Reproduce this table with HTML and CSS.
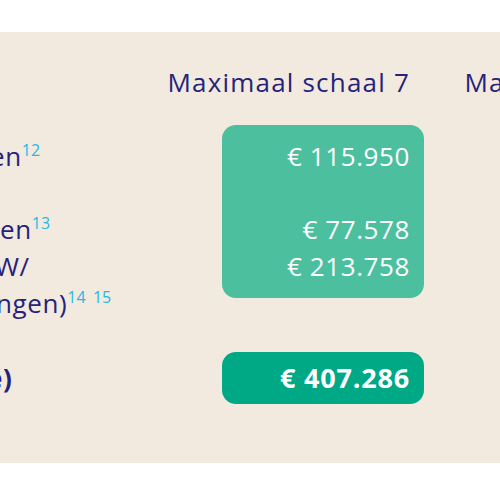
FILE: index.html
```html
<!DOCTYPE html>
<html lang="nl">
<head>
<meta charset="utf-8">
<link rel="stylesheet" href="styles.css">
</head>
<body>
<section class="band">
  <div class="table">
    <div class="labels">
      <div class="head-spacer"></div>
      <div class="label-block">
        <div class="line shift-1">en<sup>12</sup></div>
        <div class="spacer"></div>
        <div class="line">en<sup>13</sup></div>
        <div class="line shift-2">W/</div>
        <div class="line shift-3">ngen)<sup>14</sup> <sup>15</sup></div>
      </div>
      <div class="total-label"><span class="shift-4">e)</span></div>
    </div>
    <div class="col">
      <div class="head">Maximaal schaal 7</div>
      <div class="card">
        <div class="line">€ 115.950</div>
        <div class="spacer"></div>
        <div class="line">€ 77.578</div>
        <div class="line">€ 213.758</div>
      </div>
      <div class="pill">€ 407.286</div>
    </div>
    <div class="col">
      <div class="head">Maximaal schaal 8</div>
      <div class="card">
        <div class="line">€ 124.880</div>
        <div class="spacer"></div>
        <div class="line">€ 83.553</div>
        <div class="line">€ 230.218</div>
      </div>
      <div class="pill">€ 438.651</div>
    </div>
  </div>
</section>
</body>
</html>
```
FILE: styles.css
```css
html, body {
  margin: 0;
  padding: 0;
  background: #ffffff;
  overflow: hidden;
}
body {
  width: 500px;
  height: 500px;
  font-family: "Open Sans", "Liberation Sans", sans-serif;
  color: #25237a;
}
.band {
  margin-top: 32px;
  height: 431px;
  background: #f2eadf;
  overflow: hidden;
}
.table {
  display: flex;
}
.labels {
  width: 222px;
  flex: none;
  font-size: 26px;
  letter-spacing: 0.6px;
  line-height: 37px;
  overflow: hidden;
}
.head-spacer {
  height: 93px;
}
.label-block {
  padding-top: 13px;
}
.line {
  height: 37px;
  line-height: 37px;
  white-space: nowrap;
}
.spacer {
  height: 36px;
}
sup {
  font-size: 16px;
  letter-spacing: 0;
  line-height: 0;
  vertical-align: 10px;
  color: #26b8e6;
}
.shift-1 { margin-left: -10px; }
.shift-2 { margin-left: -5px; }
.shift-3 { margin-left: -4px; }
.total-label {
  margin-top: 30px;
  height: 52px;
  line-height: 52px;
  font-weight: 700;
  white-space: nowrap;
}
.shift-4 { margin-left: -13px; }
.col {
  width: 202px;
  flex: none;
  margin-right: 95px;
}
.head {
  height: 37px;
  line-height: 37px;
  padding-top: 32px;
  margin-bottom: 24px;
  font-size: 26px;
  letter-spacing: 1.2px;
  display: flex;
  justify-content: flex-end;
  padding-right: 14px;
  white-space: nowrap;
}
.card {
  background: #4cbf9f;
  border-radius: 14px;
  padding: 13px 14px;
  color: #ffffff;
  font-size: 26px;
  letter-spacing: 0.6px;
  text-align: right;
}
.pill {
  margin-top: 54px;
  height: 52px;
  line-height: 52px;
  background: #00a985;
  border-radius: 14px;
  padding-right: 14px;
  color: #ffffff;
  font-size: 27px;
  letter-spacing: 0.8px;
  font-weight: 700;
  text-align: right;
}
```
